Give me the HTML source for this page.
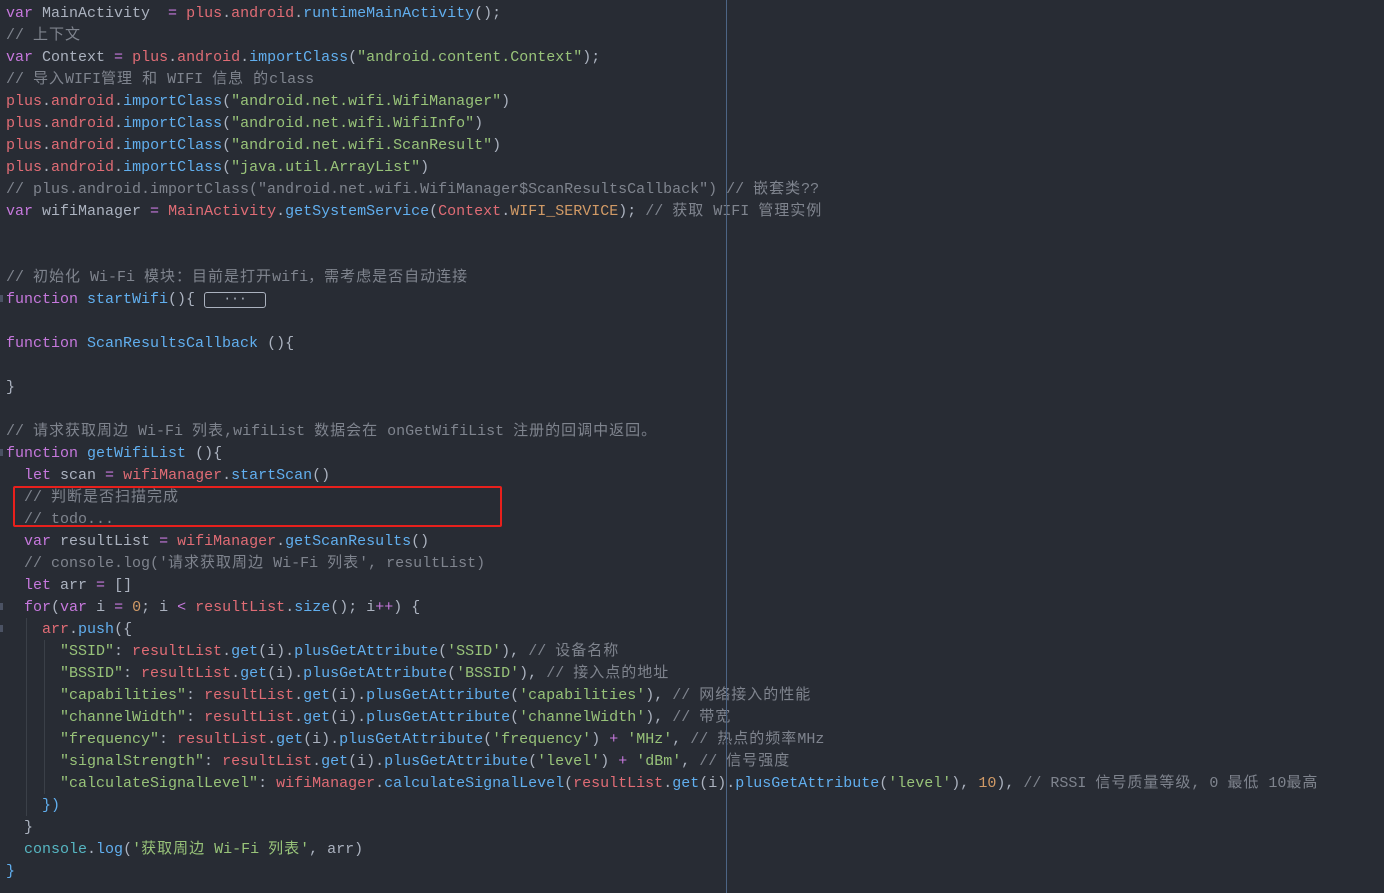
<!DOCTYPE html>
<html><head><meta charset="utf-8"><style>
html,body{margin:0;padding:0;background:#282c34;width:1384px;height:893px;overflow:hidden;}
pre{margin:0;padding:3px 0 0 6px;font-family:"Liberation Mono","Noto Sans CJK SC",monospace;font-size:15px;line-height:22px;color:#abb2bf;white-space:pre;}
i{font-style:normal;letter-spacing:1px;}
.k{color:#c678dd}.r{color:#e06c75}.f{color:#61afef}.s{color:#98c379}.c{color:#7f848e}.n{color:#d19a66}.o{color:#c678dd}.y{color:#56b6c2}.p{color:#abb2bf}
.vl{position:absolute;left:726px;top:0;width:1px;height:893px;background:#4d6585;}
.box{position:absolute;left:13px;top:486px;width:485px;height:37px;border:2px solid #e8201c;border-radius:2px;}
.dots{display:inline-block;width:60px;height:14px;border:1px solid #abb2bf;border-radius:3px;line-height:11px;text-align:center;vertical-align:1px;font-size:13px;}
.g{position:absolute;width:1px;background:#3b4048;}
.m{position:absolute;left:0;width:3px;height:7px;background:#4b5263;}
</style></head><body>
<pre><span class="k">var</span> MainActivity  <span class="o">=</span> <span class="r">plus</span>.<span class="r">android</span>.<span class="f">runtimeMainActivity</span>();
<span class="c">// <i>上下文</i></span>
<span class="k">var</span> Context <span class="o">=</span> <span class="r">plus</span>.<span class="r">android</span>.<span class="f">importClass</span>(<span class="s">"android.content.Context"</span>);
<span class="c">// <i>导入</i>WIFI<i>管理</i> <i>和</i> WIFI <i>信息</i> <i>的</i>class</span>
<span class="r">plus</span>.<span class="r">android</span>.<span class="f">importClass</span>(<span class="s">"android.net.wifi.WifiManager"</span>)
<span class="r">plus</span>.<span class="r">android</span>.<span class="f">importClass</span>(<span class="s">"android.net.wifi.WifiInfo"</span>)
<span class="r">plus</span>.<span class="r">android</span>.<span class="f">importClass</span>(<span class="s">"android.net.wifi.ScanResult"</span>)
<span class="r">plus</span>.<span class="r">android</span>.<span class="f">importClass</span>(<span class="s">"java.util.ArrayList"</span>)
<span class="c">// plus.android.importClass("android.net.wifi.WifiManager$ScanResultsCallback") // <i>嵌套类</i>??</span>
<span class="k">var</span> wifiManager <span class="o">=</span> <span class="r">MainActivity</span>.<span class="f">getSystemService</span>(<span class="r">Context</span>.<span class="n">WIFI_SERVICE</span>); <span class="c">// <i>获取</i> WIFI <i>管理实例</i></span>


<span class="c">// <i>初始化</i> Wi-Fi <i>模块：目前是打开</i>wifi<i>，需考虑是否自动连接</i></span>
<span class="k">function</span> <span class="f">startWifi</span>(){ <span class="dots">···</span>

<span class="k">function</span> <span class="f">ScanResultsCallback</span> (){

}

<span class="c">// <i>请求获取周边</i> Wi-Fi <i>列表</i>,wifiList <i>数据会在</i> onGetWifiList <i>注册的回调中返回。</i></span>
<span class="k">function</span> <span class="f">getWifiList</span> (){
  <span class="k">let</span> scan <span class="o">=</span> <span class="r">wifiManager</span>.<span class="f">startScan</span>()
  <span class="c">// <i>判断是否扫描完成</i></span>
  <span class="c">// todo...</span>
  <span class="k">var</span> resultList <span class="o">=</span> <span class="r">wifiManager</span>.<span class="f">getScanResults</span>()
  <span class="c">// console.log('<i>请求获取周边</i> Wi-Fi <i>列表</i>', resultList)</span>
  <span class="k">let</span> arr <span class="o">=</span> []
  <span class="k">for</span>(<span class="k">var</span> i <span class="o">=</span> <span class="n">0</span>; i <span class="o">&lt;</span> <span class="r">resultList</span>.<span class="f">size</span>(); i<span class="o">++</span>) {
    <span class="r">arr</span>.<span class="f">push</span>({
      <span class="s">"SSID"</span>: <span class="r">resultList</span>.<span class="f">get</span>(i).<span class="f">plusGetAttribute</span>(<span class="s">'SSID'</span>), <span class="c">// <i>设备名称</i></span>
      <span class="s">"BSSID"</span>: <span class="r">resultList</span>.<span class="f">get</span>(i).<span class="f">plusGetAttribute</span>(<span class="s">'BSSID'</span>), <span class="c">// <i>接入点的地址</i></span>
      <span class="s">"capabilities"</span>: <span class="r">resultList</span>.<span class="f">get</span>(i).<span class="f">plusGetAttribute</span>(<span class="s">'capabilities'</span>), <span class="c">// <i>网络接入的性能</i></span>
      <span class="s">"channelWidth"</span>: <span class="r">resultList</span>.<span class="f">get</span>(i).<span class="f">plusGetAttribute</span>(<span class="s">'channelWidth'</span>), <span class="c">// <i>带宽</i></span>
      <span class="s">"frequency"</span>: <span class="r">resultList</span>.<span class="f">get</span>(i).<span class="f">plusGetAttribute</span>(<span class="s">'frequency'</span>) <span class="o">+</span> <span class="s">'MHz'</span>, <span class="c">// <i>热点的频率</i>MHz</span>
      <span class="s">"signalStrength"</span>: <span class="r">resultList</span>.<span class="f">get</span>(i).<span class="f">plusGetAttribute</span>(<span class="s">'level'</span>) <span class="o">+</span> <span class="s">'dBm'</span>, <span class="c">// <i>信号强度</i></span>
      <span class="s">"calculateSignalLevel"</span>: <span class="r">wifiManager</span>.<span class="f">calculateSignalLevel</span>(<span class="r">resultList</span>.<span class="f">get</span>(i).<span class="f">plusGetAttribute</span>(<span class="s">'level'</span>), <span class="n">10</span>), <span class="c">// RSSI <i>信号质量等级</i>, 0 <i>最低</i> 10<i>最高</i></span>
    <span class="f">})</span>
  }
  <span class="y">console</span>.<span class="f">log</span>(<span class="s">'<i>获取周边</i> Wi-Fi <i>列表</i>'</span>, arr)
<span class="f">}</span></pre>
<div class="vl"></div>
<div class="box"></div>
<div class="g" style="left:26px;top:618px;height:198px"></div>
<div class="g" style="left:44px;top:640px;height:154px"></div>
<div class="m" style="top:295px"></div>
<div class="m" style="top:449px"></div>
<div class="m" style="top:603px"></div>
<div class="m" style="top:625px"></div>
</body></html>
